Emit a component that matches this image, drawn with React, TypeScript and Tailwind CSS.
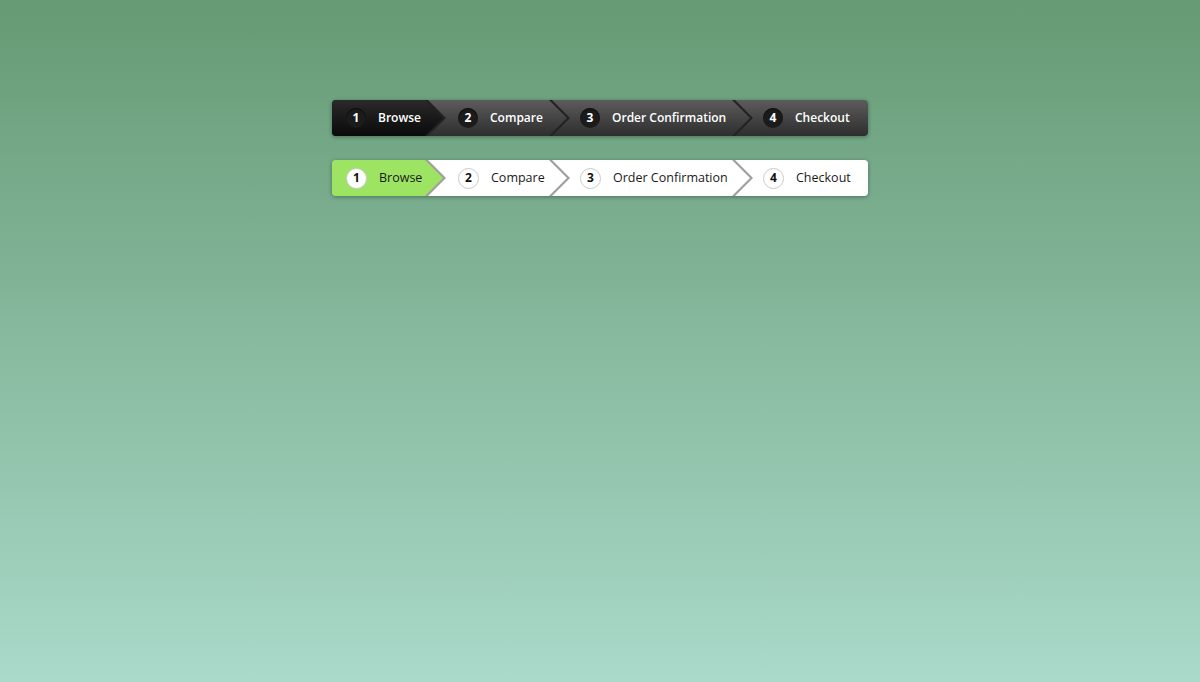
type Step = { n: number; label: string; width: number; pad: number };

const STEPS: Step[] = [
  { n: 1, label: "Browse", width: 96, pad: 14 },
  { n: 2, label: "Compare", width: 124, pad: 30 },
  { n: 3, label: "Order Confirmation", width: 183, pad: 28 },
  { n: 4, label: "Checkout", width: 133, pad: 28 },
];

const Z = ["z-[4]", "z-[3]", "z-[2]", "z-[1]"];

// arrow shape: flat left edge, pointed right tip 18px deep
const ARROW = "[clip-path:polygon(0_0,calc(100%-18px)_0,100%_50%,calc(100%-18px)_100%,0_100%)]";

function Crumb({
  step,
  index,
  theme,
}: {
  step: Step;
  index: number;
  theme: "dark" | "light";
}) {
  const last = index === STEPS.length - 1;
  const active = index === 0;
  const dark = theme === "dark";

  const fill = dark
    ? active
      ? "bg-gradient-to-b from-[#2a2a2a] to-[#0a0a0a]"
      : "bg-gradient-to-b from-[#5c5c5c] to-[#2e2e2e]"
    : active
      ? "bg-[#9de463]"
      : "bg-white";

  const edge = dark ? "bg-[#222222]" : "bg-[#9e9e9e]";

  const content = (
    <div className="flex h-full items-center" style={{ paddingLeft: step.pad }}>
      <span
        className={
          dark
            ? "flex h-5 w-5 items-center justify-center rounded-full bg-[#1b1b1b] text-[12px] font-bold text-white shadow-[inset_0_1px_1px_rgba(0,0,0,0.6)]"
            : "flex h-[21px] w-[21px] items-center justify-center rounded-full border border-[#c9c9c9] bg-white text-[12px] font-bold text-[#111]"
        }
      >
        {step.n}
      </span>
      <span
        className={
          dark
            ? "ml-[12px] text-[12px] font-semibold whitespace-nowrap text-white"
            : "ml-[12px] text-[12.5px] whitespace-nowrap text-[#1a1a1a]"
        }
      >
        {step.label}
      </span>
    </div>
  );

  if (last) {
    return (
      <div className={`relative h-full ${fill}`} style={{ width: step.width }}>
        {content}
      </div>
    );
  }

  return (
    <div
      className={`relative -mr-[18px] h-full ${Z[index]} ${ARROW} ${edge}`}
      style={{ width: step.width + 18 }}
    >
      <div className={`absolute inset-y-0 left-0 right-[3px] ${ARROW} ${fill}`}>{content}</div>
    </div>
  );
}

function Breadcrumb({ theme }: { theme: "dark" | "light" }) {
  return (
    <div className="flex h-[36px] w-[536px] overflow-hidden rounded-[4px] shadow-[0_1px_4px_rgba(0,0,0,0.35)]">
      {STEPS.map((s, i) => (
        <Crumb key={s.n} step={s} index={i} theme={theme} />
      ))}
    </div>
  );
}

export default function App() {
  return (
    <div
      className="flex h-[682px] w-full flex-col items-center bg-gradient-to-b from-[#659a74] to-[#aadaca] pt-[100px]"
      style={{ fontFamily: '"Open Sans", "Noto Sans", sans-serif' }}
    >
      <div className="flex flex-col gap-6">
        <Breadcrumb theme="dark" />
        <Breadcrumb theme="light" />
      </div>
    </div>
  );
}
